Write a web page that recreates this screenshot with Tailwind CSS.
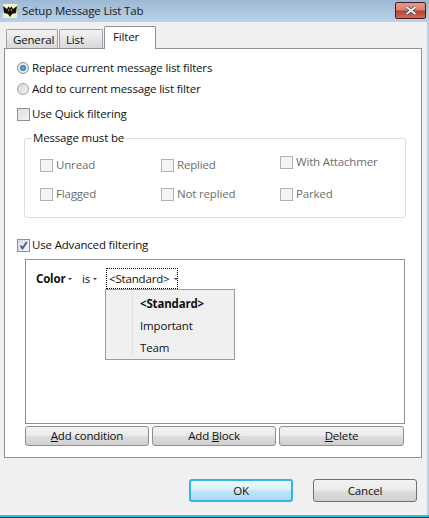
<!DOCTYPE html>
<html lang="en">
<head>
<meta charset="UTF-8">
<title>Setup Message List Tab</title>
<script src="https://cdn.jsdelivr.net/npm/@tailwindcss/browser@4"></script>
</head>
<body class="w-[429px] h-[518px] overflow-hidden bg-[#f0f0f0] font-['Open_Sans',sans-serif] text-[11.5px] tracking-[-0.17px] text-[#111]">

<!-- Title bar -->
<header class="h-[22px] flex items-center bg-gradient-to-b from-[#9db8d4] to-[#b9d2ea] relative">
  <svg class="ml-[3px] w-[14px] h-[14px]" viewBox="0 0 14 14">
    <rect width="14" height="14" fill="#f4f1c8"/>
    <path d="M0 2 L4 5 L5.5 2.5 L7 4 L8.5 2.5 L10 5 L14 2 L13 9 L9 10 L7 13 L5 10 L1 9 Z" fill="#15120a"/>
    <path d="M5 5.5h1.2v1.2H5zM7.8 5.5H9v1.2H7.8z" fill="#e8c81e"/>
  </svg>
  <span class="ml-[5px] text-[11.5px] text-[#1b1b1b]">Setup Message List Tab</span>
  <div class="absolute left-[395px] top-[2px] w-[31px] h-[17px] rounded-[2px] border border-[#4a1a20] bg-[linear-gradient(#e49b8c_0%,#d98272_48%,#b8402c_52%,#d06a58_100%)] flex items-center justify-center">
    <svg class="w-[12px] h-[9px]" viewBox="0 0 12 9"><path d="M1.5 1 L10.5 8 M10.5 1 L1.5 8" stroke="#4c5058" stroke-width="3.4"/><path d="M1.5 1 L10.5 8 M10.5 1 L1.5 8" stroke="#f4f4f4" stroke-width="1.8"/></svg>
  </div>
</header>

<div class="pl-[4px] pr-[8px] relative">
  <!-- Tabs -->
  <div class="flex items-end h-[26px] pl-[2px]">
    <div class="w-[52px] h-[19px] border border-b-0 border-[#a0a0a8] rounded-t-[2px] bg-gradient-to-b from-[#f4f4f4] to-[#d8d8d8] pl-[6px] leading-[19px]">General</div>
    <div class="ml-[1px] w-[44px] h-[19px] border border-b-0 border-[#a0a0a8] rounded-t-[2px] bg-gradient-to-b from-[#f4f4f4] to-[#d8d8d8] pl-[6px] leading-[19px]">List</div>
    <div class="ml-[1px] w-[52px] h-[23px] -mb-px z-10 border border-b-0 border-[#8e8f98] rounded-t-[2px] bg-white pl-[8px] leading-[19px]">Filter</div>
  </div>

  <!-- Tab page -->
  <main class="w-[418px] h-[410px] border border-[#8e8f98] bg-white pt-[11px] pl-[11px]">
    <label class="flex items-center h-[16px] ml-[1px]">
      <span class="w-[12px] h-[12px] rounded-full border border-[#8f8f8f] bg-[#e8e8e8] flex items-center justify-center">
        <span class="w-[6px] h-[6px] rounded-full bg-[radial-gradient(#5cc0ec,#175a86)]"></span>
      </span>
      <span class="ml-[3px]">Replace current message list filters</span>
    </label>
    <label class="flex items-center h-[16px] ml-[1px] mt-[5px]">
      <span class="w-[12px] h-[12px] rounded-full border border-[#a0a0a0] bg-gradient-to-br from-[#d8d8d8] to-[#f4f4f4]"></span>
      <span class="ml-[3px]">Add to current message list filter</span>
    </label>
    <label class="flex items-center h-[16px] ml-[1px] mt-[9px]">
      <span class="w-[13px] h-[13px] border border-[#8f8f8f] bg-gradient-to-br from-[#dcdcdc] to-[#f6f6f6]"></span>
      <span class="ml-[2px]">Use Quick filtering</span>
    </label>

    <!-- Message must be -->
    <fieldset class="relative mt-[16px] ml-[8px] w-[382px] h-[80px] border border-[#d5dfe5] rounded-[3px]">
      <legend class="absolute left-[7px] -top-[8px] bg-white px-[1px] leading-[14px]">Message must be</legend>
      <div class="grid grid-cols-[121px_119px_1fr] pl-[15px] pt-[18px] text-[#6d6d6d]">
        <label class="flex items-center h-[16px] gap-[3px]"><span class="w-[13px] h-[13px] border border-[#b1b1b1] bg-[#f4f4f4]"></span>Unread</label>
        <label class="flex items-center h-[16px] gap-[3px]"><span class="w-[13px] h-[13px] border border-[#b1b1b1] bg-[#f4f4f4]"></span>Replied</label>
        <label class="flex items-center h-[16px] -mt-[3px] gap-[3px]"><span class="w-[13px] h-[13px] border border-[#b1b1b1] bg-[#f4f4f4]"></span>With Attachmer</label>
        <label class="flex items-center h-[16px] mt-[13px] gap-[3px]"><span class="w-[13px] h-[13px] border border-[#b1b1b1] bg-[#f4f4f4]"></span>Flagged</label>
        <label class="flex items-center h-[16px] mt-[13px] gap-[3px]"><span class="w-[13px] h-[13px] border border-[#b1b1b1] bg-[#f4f4f4]"></span>Not replied</label>
        <label class="flex items-center h-[16px] mt-[13px] gap-[3px]"><span class="w-[13px] h-[13px] border border-[#b1b1b1] bg-[#f4f4f4]"></span>Parked</label>
      </div>
    </fieldset>

    <label class="flex items-center h-[16px] ml-[1px] mt-[19px]">
      <span class="w-[13px] h-[13px] border border-[#8f8f8f] bg-gradient-to-br from-[#dcdcdc] to-[#f6f6f6] flex items-center justify-center">
        <svg class="w-[9px] h-[9px]" viewBox="0 0 9 9"><path d="M1.5 4.5 L3.5 7.5 L7.8 1" fill="none" stroke="#3d5a9e" stroke-width="1.8"/></svg>
      </span>
      <span class="ml-[2px]">Use Advanced filtering</span>
    </label>

    <!-- Condition editor -->
    <div class="relative mt-[6px] ml-[9px] w-[380px] h-[165px] border border-[#8e8f98] pl-[10px] pt-[8px]">
      <div class="flex items-center h-[21px]">
        <span class="font-bold w-[29px]">Color</span><span class="ml-[3px] w-0 h-0 border-x-[2px] border-t-[2px] border-x-transparent border-t-[#333]"></span>
        <span class="ml-[10px] w-[11px]">is</span><span class="ml-[0px] w-0 h-0 border-x-[2px] border-t-[2px] border-x-transparent border-t-[#333]"></span>
        <span class="ml-[9px] h-[21px] w-[72px] border border-dotted border-black flex items-center pl-[2px]">&lt;Standard&gt;<span class="ml-[5px] w-0 h-0 border-x-[2px] border-t-[2px] border-x-transparent border-t-[#333]"></span></span>
      </div>
      <div class="absolute left-[79px] top-[29px] w-[130px] h-[71px] border border-[#9a9a9a] bg-[#f0f0f0] flex">
        <div class="w-[27px] border-r border-[#e2e3e3] my-[3px]"></div>
        <ul class="pl-[7px] pt-[3px] leading-[22px]">
          <li class="font-bold">&lt;Standard&gt;</li>
          <li>Important</li>
          <li>Team</li>
        </ul>
      </div>
    </div>

    <div class="flex ml-[9px] mt-[2px] gap-[3px]">
      <button class="w-[124px] h-[20px] rounded-[3px] border border-[#8e8f8f] bg-[linear-gradient(#f2f2f2_0%,#ebebeb_48%,#dddddd_52%,#cfcfcf_100%)]"><u>A</u>dd condition</button>
      <button class="w-[124px] h-[20px] rounded-[3px] border border-[#8e8f8f] bg-[linear-gradient(#f2f2f2_0%,#ebebeb_48%,#dddddd_52%,#cfcfcf_100%)]">Add <u>B</u>lock</button>
      <button class="w-[125px] h-[20px] rounded-[3px] border border-[#8e8f8f] bg-[linear-gradient(#f2f2f2_0%,#ebebeb_48%,#dddddd_52%,#cfcfcf_100%)]"><u>D</u>elete</button>
    </div>
  </main>

  <!-- Dialog buttons -->
  <div class="flex mt-[21px] ml-[185px] gap-[20px]">
    <button class="w-[104px] h-[23px] rounded-[3px] border-2 border-[#35b5e4] bg-[linear-gradient(#eef8fd_0%,#d8eefa_48%,#bfe4f7_52%,#a8d9f2_100%)]">OK</button>
    <button class="w-[104px] h-[23px] rounded-[3px] border border-[#707070] bg-[linear-gradient(#f2f2f2_0%,#ebebeb_48%,#dddddd_52%,#cfcfcf_100%)]">Cancel</button>
  </div>
</div>

<!-- Window edges -->
<div class="absolute left-0 top-[515px] w-[429px] h-[3px] bg-[linear-gradient(#2cc0e8_0%,#2cc0e8_50%,#10303c_50%)]"></div>
<div class="absolute left-[427px] top-[22px] w-[2px] h-[493px] bg-[#b9d2ea]"></div>
</body>
</html>
